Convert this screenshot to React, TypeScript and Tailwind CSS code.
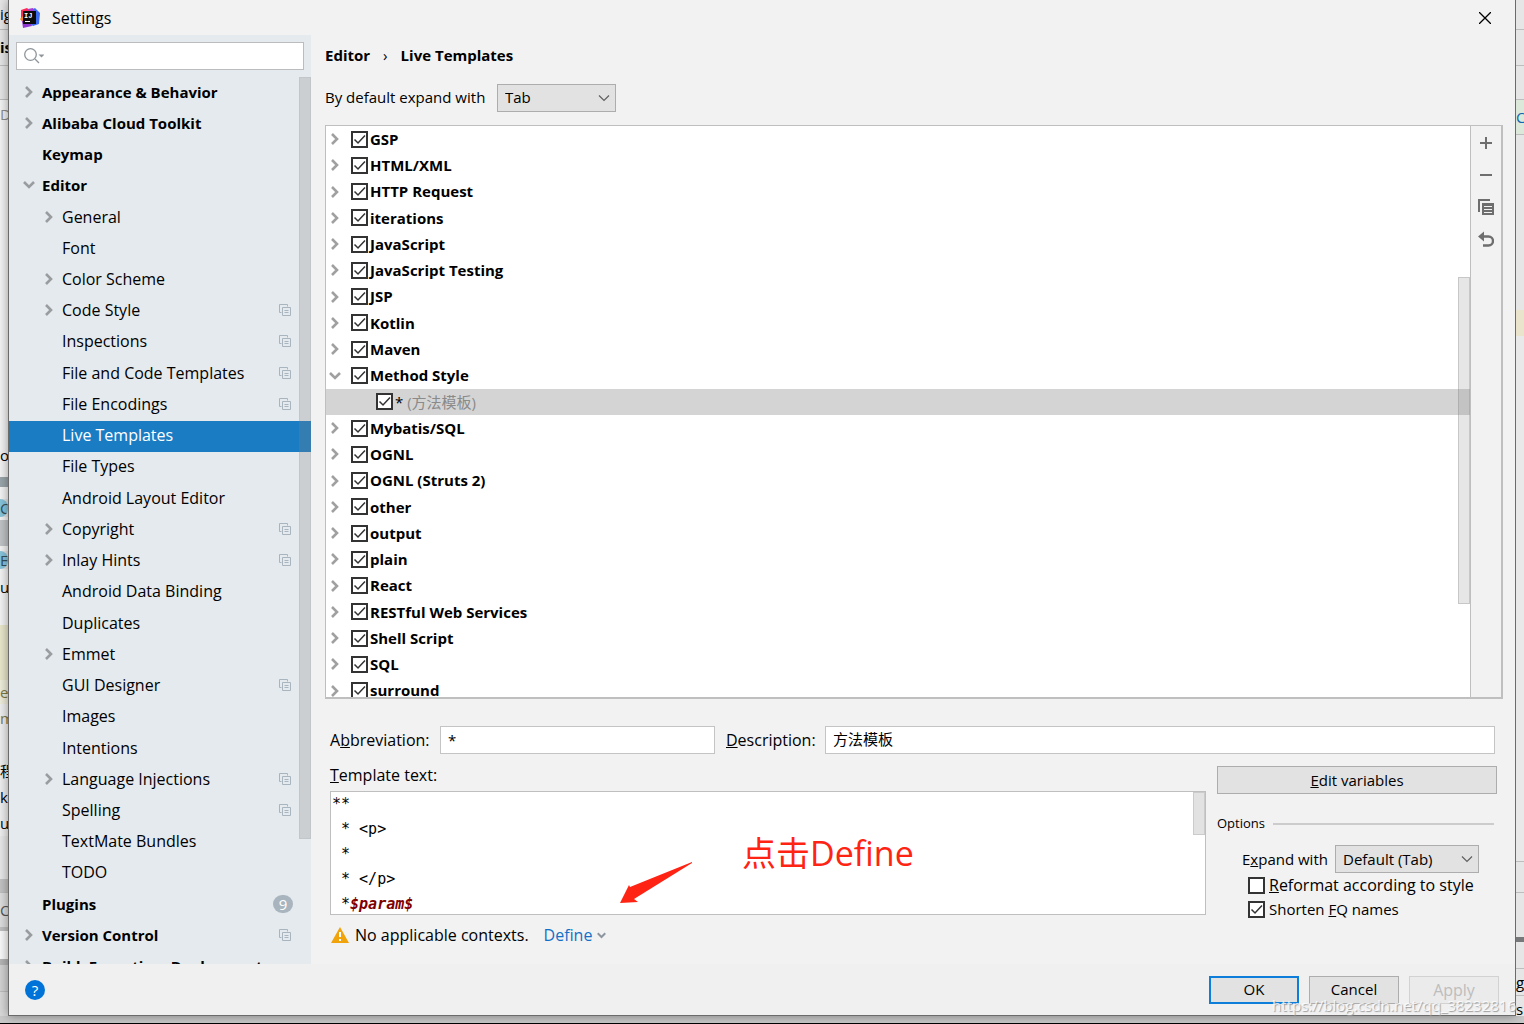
import React, { useState } from "react"

type TreeItem = {
  label: string
  level?: number
  arrow?: "right" | "down"
  project?: boolean
  badge?: number
}

type Strip = {
  h: number
  bg?: string
  line?: boolean
  text?: string
  bold?: boolean
  round?: boolean
  color?: string
}

const SETTINGS: TreeItem[] = [
  { label: "Appearance & Behavior", arrow: "right" },
  { label: "Alibaba Cloud Toolkit", arrow: "right" },
  { label: "Keymap" },
  { label: "Editor", arrow: "down" },
  { label: "General", level: 1, arrow: "right" },
  { label: "Font", level: 1 },
  { label: "Color Scheme", level: 1, arrow: "right" },
  { label: "Code Style", level: 1, arrow: "right", project: true },
  { label: "Inspections", level: 1, project: true },
  { label: "File and Code Templates", level: 1, project: true },
  { label: "File Encodings", level: 1, project: true },
  { label: "Live Templates", level: 1 },
  { label: "File Types", level: 1 },
  { label: "Android Layout Editor", level: 1 },
  { label: "Copyright", level: 1, arrow: "right", project: true },
  { label: "Inlay Hints", level: 1, arrow: "right", project: true },
  { label: "Android Data Binding", level: 1 },
  { label: "Duplicates", level: 1 },
  { label: "Emmet", level: 1, arrow: "right" },
  { label: "GUI Designer", level: 1, project: true },
  { label: "Images", level: 1 },
  { label: "Intentions", level: 1 },
  { label: "Language Injections", level: 1, arrow: "right", project: true },
  { label: "Spelling", level: 1, project: true },
  { label: "TextMate Bundles", level: 1 },
  { label: "TODO", level: 1 },
  { label: "Plugins", badge: 9 },
  { label: "Version Control", arrow: "right", project: true },
  { label: "Build, Execution, Deployment", arrow: "right" },
]

const GROUPS_BEFORE = [
  "GSP",
  "HTML/XML",
  "HTTP Request",
  "iterations",
  "JavaScript",
  "JavaScript Testing",
  "JSP",
  "Kotlin",
  "Maven",
]

const GROUPS_AFTER = [
  "Mybatis/SQL",
  "OGNL",
  "OGNL (Struts 2)",
  "other",
  "output",
  "plain",
  "React",
  "RESTful Web Services",
  "Shell Script",
  "SQL",
  "surround",
]

// slices of the IDE window that stay visible on both sides of the dialog
const LEFT_STRIP: Strip[] = [
  { h: 29, text: "ig" },
  { h: 36, line: true, text: "is", bold: true },
  { h: 34, line: true },
  { h: 30, line: true, bg: "#f4f4f4", text: "D", color: "#8c8c8c" },
  { h: 314, bg: "#f4f4f4" },
  { h: 24, bg: "#f4f4f4", text: "or" },
  { h: 10, bg: "#f4f4f4" },
  { h: 10, bg: "#9aa5ab" },
  { h: 12, bg: "#f4f4f4" },
  { h: 18, bg: "#86c5dc", text: "C", color: "#35505c", round: true },
  { h: 3, bg: "#f4f4f4" },
  { h: 26, bg: "#c0c4c6" },
  { h: 5, bg: "#f4f4f4" },
  { h: 18, bg: "#86c5dc", text: "E", color: "#35505c", round: true },
  { h: 6, bg: "#f4f4f4" },
  { h: 24, bg: "#f4f4f4", text: "ur" },
  { h: 26, bg: "#f4f4f4" },
  { h: 55, bg: "#e9e7cb" },
  { h: 24, bg: "#efedda", text: "ec", color: "#7d7a45" },
  { h: 28, bg: "#efefef", text: "m", color: "#7d7a45" },
  { h: 26, bg: "#efefef" },
  { h: 26, bg: "#efefef", text: "程" },
  { h: 26, bg: "#efefef", text: "k" },
  { h: 26, bg: "#efefef", text: "uc" },
  { h: 43, bg: "#e8e8e8" },
  { h: 13, bg: "#c3c3c3" },
  { h: 35, line: true, bg: "#dedede", text: "C", color: "#555555" },
  { h: 4, bg: "#c0c0c0" },
  { h: 28, bg: "#fafafa" },
  { h: 6, bg: "#b5b5b5" },
  { h: 26, bg: "#d2d2d2" },
  { h: 28, line: true, bg: "#d8d8d8" },
]

const RIGHT_STRIP: Strip[] = [
  { h: 29 },
  { h: 36, line: true },
  { h: 34, line: true },
  { h: 35, line: true, bg: "#dbe8da", text: "C", color: "#1068b0" },
  { h: 176, line: true },
  { h: 26, bg: "#e9e4cb" },
  { h: 525, bg: "#e9e9e9" },
  { h: 31, line: true },
  { h: 45, line: true },
  { h: 5, bg: "#77787a" },
  { h: 26 },
  { h: 27, line: true, text: "g" },
  { h: 28, line: true, text: "s" },
]

const BackdropStrip: React.FC<{ cells: Strip[] }> = ({ cells }) => (
  <div aria-hidden="true" className="flex flex-col bg-[#e6e6e6] w-[8px] shrink-0 overflow-hidden">
    {cells.map((cell, i) => (
      <div
        key={i}
        className={`flex items-center shrink-0 whitespace-nowrap overflow-hidden ${
          cell.line ? "border-t border-[#bdbdbd]" : ""
        } ${cell.bold ? "font-bold" : ""} ${cell.round ? "rounded-r-full" : ""}`}
        style={{ height: cell.h, background: cell.bg, color: cell.color }}
      >
        {cell.text}
      </div>
    ))}
  </div>
)

const Arrow: React.FC<{ dir?: "right" | "down"; className?: string }> = ({
  dir,
  className = "w-3 h-3",
}) => (
  <svg
    className={`shrink-0 ${className}`}
    viewBox="0 0 12 12"
    fill="none"
    stroke="currentColor"
    strokeWidth={2.6}
  >
    {dir === "right" && <path d="M3 1l5 5-5 5" />}
    {dir === "down" && <path d="M1 3l5 5 5-5" />}
  </svg>
)

const ProjectIcon = () => (
  <svg className="w-3 h-3" viewBox="0 0 12 12" fill="none" stroke="#a9b5be">
    <path d="M2.5 8.5h-2v-8h8v2" />
    <path d="M3.5 3.5h8v8h-8z" />
    <path d="M5.5 6.5h4M5.5 8.5h4" />
  </svg>
)

const Logo = () => (
  <svg className="w-5 h-5" viewBox="0 0 20 20">
    <path d="M1 2L7 0l5 4-4 9-7-3z" fill="#fe2857" />
    <path d="M0 11l4-4 3 6-4 2z" fill="#fc801d" />
    <path d="M2 13l8-2 2 7-9 2z" fill="#9039d0" />
    <path d="M11 2l4-2 5 5-1 11-6 2-4-3z" fill="#3b6cf0" />
    <path d="M8 1l5-1 2 4-5 1z" fill="#a63ad6" />
    <path d="M3 3h13v13H3z" fill="#0b0b0b" />
    <text x="4" y="10" fontSize="7" fontWeight="bold" fill="#fff" fontFamily="Liberation Mono, monospace">
      IJ
    </text>
    <path d="M5 13h5v1H5z" fill="#fff" />
  </svg>
)

const Checkbox: React.FC<{ label: string; defaultChecked?: boolean; children?: React.ReactNode }> = ({
  label,
  defaultChecked = true,
  children,
}) => (
  <label className="flex items-center gap-[2px]">
    <span className="grid shrink-0">
      <input
        type="checkbox"
        aria-label={label}
        defaultChecked={defaultChecked}
        className="peer col-start-1 row-start-1 appearance-none w-[17px] h-[17px] bg-white border-2 border-[#333333]"
      />
      <svg
        className="hidden peer-checked:block pointer-events-none col-start-1 row-start-1 w-[17px] h-[17px]"
        viewBox="0 0 17 17"
        fill="none"
        stroke="#333333"
        strokeWidth={1.5}
      >
        <path d="M3.5 8.5l3.5 3.5 7-7.5" />
      </svg>
    </span>
    {children}
  </label>
)

const Select: React.FC<{ id: string; options: string[]; className: string }> = ({
  id,
  options,
  className,
}) => (
  <span className={`grid text-[15px] ${className}`}>
    <select
      id={id}
      className="col-start-1 row-start-1 appearance-none w-full h-7 pl-[7px] bg-[#e2e2e2] border border-[#adadad]"
    >
      {options.map((option) => (
        <option key={option}>{option}</option>
      ))}
    </select>
    <svg
      className="pointer-events-none col-start-1 row-start-1 justify-self-end self-center mr-[6px] w-3 h-3"
      viewBox="0 0 12 12"
      fill="none"
      stroke="#606060"
      strokeWidth={1.2}
    >
      <path d="M1 3.5l5 5 5-5" />
    </svg>
  </span>
)

const SettingsTree: React.FC = () => {
  const [selected, setSelected] = useState("Live Templates")

  return (
    <div className="relative flex-1 min-h-0 overflow-hidden">
      <ul className="flex flex-col h-[906px]">
        {SETTINGS.map((item) => {
          const active = item.label === selected
          return (
            <li
              key={item.label}
              onClick={() => setSelected(item.label)}
              className={`flex flex-1 items-center pr-5 pb-[2px] ${
                item.level ? "pl-[34px] text-base" : "pl-[14px] font-bold"
              } ${active ? "bg-[#1a7dc4] text-white" : ""}`}
            >
              <Arrow dir={item.arrow} className="w-3 h-3 text-[#9a9da0] mr-[7px]" />
              <span className="flex-1 whitespace-nowrap leading-6">{item.label}</span>
              {item.project && <ProjectIcon />}
              {item.badge && (
                <span className="-mr-[2px] w-5 h-[18px] rounded-full bg-[#a9b5be] text-white text-center leading-[18px] font-normal">
                  {item.badge}
                </span>
              )}
            </li>
          )
        })}
      </ul>
      <div className="absolute top-0 right-0 w-3 h-[762px] bg-[#808080]/25 border border-[#808080]/10"></div>
    </div>
  )
}

const TemplateGroup: React.FC<{ name: string; open?: boolean }> = ({ name, open }) => (
  <li className="flex flex-1 items-center pl-[3px] font-bold">
    <Arrow dir={open ? "down" : "right"} className="w-3 h-3 text-[#a0a0a0] mr-[10px]" />
    <Checkbox label={name}>{name}</Checkbox>
  </li>
)

const TemplateList: React.FC = () => (
  <div className="flex flex-1 min-h-0 border border-b-2 border-r-2 border-[#bfbfbf]">
    <div className="relative flex-1 overflow-hidden bg-white">
      <ul className="flex flex-col h-[578px]">
        {GROUPS_BEFORE.map((name) => (
          <TemplateGroup key={name} name={name} />
        ))}
        <TemplateGroup name="Method Style" open />
        <li className="flex flex-1 items-center pl-[50px] bg-[#d4d4d4]">
          <Checkbox label="*">
            <span>
              * <span className="text-[#8a8a8a]">(方法模板)</span>
            </span>
          </Checkbox>
        </li>
        {GROUPS_AFTER.map((name) => (
          <TemplateGroup key={name} name={name} />
        ))}
      </ul>
      <div className="absolute top-[151px] right-0 w-3 h-[327px] bg-[#808080]/20 border border-[#808080]/30"></div>
    </div>
    <div className="flex flex-col items-center w-[31px] pt-[9px] gap-4 border-l border-[#bfbfbf] text-[#6e6e6e]">
      <button aria-label="Add">
        <svg className="block w-4 h-4" viewBox="0 0 16 16" fill="currentColor">
          <path d="M7 2h2v5h5v2H9v5H7V9H2V7h5z" />
        </svg>
      </button>
      <button aria-label="Remove">
        <svg className="block w-4 h-4" viewBox="0 0 16 16" fill="currentColor">
          <path d="M2 7h12v2H2z" />
        </svg>
      </button>
      <button aria-label="Duplicate">
        <svg className="block w-4 h-4" viewBox="0 0 16 16" fill="currentColor">
          <path d="M0 0h12v2H2v11H0z" />
          <path d="M4 4h12v12H4zm2 3v1h8V7zm0 3v1h8v-1zm0 3v1h8v-1z" fillRule="evenodd" />
        </svg>
      </button>
      <button aria-label="Restore defaults">
        <svg className="block w-4 h-4" viewBox="0 0 16 16" fill="none">
          <path d="M5 5.5h5.500a4.500 4.500 0 0 1 0 9H5" stroke="currentColor" strokeWidth={2.4} />
          <path d="M0 5.500l6-5v10z" fill="currentColor" />
        </svg>
      </button>
    </div>
  </div>
)

const TemplateEditor: React.FC = () => (
  <div className="relative h-[124px] bg-white border border-[#bfbfbf]">
    <pre
      role="textbox"
      aria-labelledby="template-text"
      className="h-full overflow-hidden pl-[1px] text-[15px] leading-[25px] font-['DejaVu_Sans_Mono',monospace]"
    >
      {"**\n * <p>\n *\n * </p>\n *"}
      <span className="font-bold italic text-[#800000]">$param$</span>
    </pre>
    <div className="absolute top-0 right-0 w-3 h-[43px] bg-[#e2e2e2] border border-[#cbcbcb]"></div>
    <svg className="absolute left-[288px] top-[69px] w-[74px] h-[43px]" viewBox="0 0 74 43">
      <path d="M73 1L11 26l-1-2-9 18 18-1-4-3L73 2z" fill="#ff2314" />
    </svg>
    <span className="absolute left-[411px] top-[37px] text-[34px] leading-[48px] text-[#ff2314] whitespace-nowrap">
      点击Define
    </span>
  </div>
)

const TemplateForm: React.FC = () => (
  <div className="flex flex-col pl-[5px] pt-[27px] h-[265px] shrink-0 text-base">
    <div className="flex items-center pr-2">
      <label htmlFor="abbreviation" className="w-[110px]">
        A<u>b</u>breviation:
      </label>
      <input
        id="abbreviation"
        defaultValue="*"
        className="w-[275px] h-7 px-[7px] text-[15px] bg-white border border-[#c4c4c4]"
      />
      <label htmlFor="description" className="ml-[11px] w-[99px]">
        <u>D</u>escription:
      </label>
      <input
        id="description"
        defaultValue="方法模板"
        className="flex-1 h-7 px-[7px] pb-1 text-[15px] bg-white border border-[#c4c4c4]"
      />
    </div>
    <div className="flex pt-3 gap-[11px] pr-[6px]">
      <div className="flex-1">
        <div id="template-text" className="h-[25px] leading-[18px]">
          <u>T</u>emplate text:
        </div>
        <TemplateEditor />
        <div className="flex items-center h-10">
          <svg className="w-5 h-4 mr-[5px]" viewBox="0 0 20 16">
            <path d="M10 0l9 16H1z" fill="#f0a30a" />
            <path d="M9 5h2v5H9zM9 12h2v2H9z" fill="#fff" />
          </svg>
          No applicable contexts.
          <a href="#define" className="flex items-center gap-[5px] ml-[15px] text-[#1370c8]">
            Define
            <Arrow dir="down" className="w-[9px] h-[9px] text-[#8d969e]" />
          </a>
        </div>
      </div>
      <div className="w-[280px]">
        <button className="block w-full h-7 text-[15px] bg-[#e2e2e2] border border-[#adadad]">
          <u>E</u>dit variables
        </button>
        <fieldset className="pt-5">
          <div className="flex items-center gap-2 h-5 pr-[3px] text-[13px]">
            Options
            <span className="flex-1 border-t-2 border-[#cccccc]"></span>
          </div>
          <div className="flex items-center pl-[25px] pt-[11px]">
            <label htmlFor="expand-with" className="w-[93px] text-[15px] whitespace-nowrap">
              E<u>x</u>pand with
            </label>
            <Select id="expand-with" options={["Default (Tab)", "Enter", "Space"]} className="w-[144px]" />
          </div>
          <div className="flex flex-col pl-[31px]">
            <Checkbox label="Reformat according to style" defaultChecked={false}>
              <span className="pl-[2px] leading-6 whitespace-nowrap">
                <u>R</u>eformat according to style
              </span>
            </Checkbox>
            <Checkbox label="Shorten FQ names">
              <span className="pl-[2px] text-[15px] leading-6 whitespace-nowrap">
                Shorten <u>F</u>Q names
              </span>
            </Checkbox>
          </div>
        </fieldset>
      </div>
    </div>
  </div>
)

const App: React.FC = () => {
  return (
    <div className="relative flex flex-col h-screen overflow-hidden bg-[#c9c9c9] text-[15px] text-black font-['Open_Sans','Noto_Sans_CJK_SC',sans-serif]">
      <div className="flex flex-1 min-h-0">
        <BackdropStrip cells={LEFT_STRIP} />
        <div
          role="dialog"
          aria-label="Settings"
          className="flex flex-col flex-1 min-w-0 bg-[#f2f2f2] border border-t-0 border-[#6b6b6b] shadow-[0_0_10px_rgba(0,0,0,0.4)]"
        >
          <header className="flex items-center h-[35px] shrink-0 pl-[11px] pr-6">
            <Logo />
            <h1 className="flex-1 pl-3 text-base">Settings</h1>
            <button aria-label="Close">
              <svg className="w-3 h-3" viewBox="0 0 12 12" stroke="#000" strokeWidth={1.3}>
                <path d="M0 0l12 12M12 0L0 12" />
              </svg>
            </button>
          </header>

          <div className="flex flex-1 min-h-0">
            <aside className="flex flex-col w-[302px] shrink-0 bg-[#e5eaee]">
              <div className="grid p-[7px]">
                <input
                  type="search"
                  aria-label="Search settings"
                  className="col-start-1 row-start-1 w-full h-7 pl-8 bg-white border border-[#bcbcbc]"
                />
                <svg
                  className="pointer-events-none col-start-1 row-start-1 self-center ml-2 w-5 h-4"
                  viewBox="0 0 20 16"
                  fill="none"
                  stroke="#8d959b"
                  strokeWidth={1.3}
                >
                  <circle cx="6.500" cy="6.500" r="5.800" />
                  <path d="M11 11l4 4" />
                  <path d="M14.500 6.500h6L17.500 9.500z" fill="#8d959b" stroke="none" />
                </svg>
              </div>
              <SettingsTree />
            </aside>

            <main className="flex flex-col flex-1 min-w-0 pl-[14px] pr-3">
              <div className="flex items-center gap-[13px] h-10 shrink-0 font-bold">
                Editor
                <span className="font-normal">›</span>
                Live Templates
              </div>
              <div className="flex items-center h-[45px] mb-[5px] shrink-0">
                <label htmlFor="default-expand" className="w-[172px] whitespace-nowrap">
                  By default expand with
                </label>
                <Select id="default-expand" options={["Tab", "Enter", "Space"]} className="w-[119px]" />
              </div>
              <TemplateList />
              <TemplateForm />
            </main>
          </div>

          <footer className="flex items-center gap-[10px] h-[51px] shrink-0 pl-4 pr-4 bg-[#f0f0f0]">
            <button
              aria-label="Help"
              className="w-5 h-5 rounded-full bg-[#0073d8] text-white leading-5"
            >
              ?
            </button>
            <span className="flex-1"></span>
            <button className="w-[90px] h-7 bg-[#e2e2e2] border-2 border-[#0d7fdb]">OK</button>
            <button className="w-[90px] h-7 bg-[#e2e2e2] border border-[#adadad]">Cancel</button>
            <button
              disabled
              className="w-[90px] h-7 text-base bg-[#ebebeb] border border-[#d2d2d2] text-[#bdbdbd]"
            >
              Apply
            </button>
          </footer>
        </div>
        <BackdropStrip cells={RIGHT_STRIP} />
      </div>
      <div className="h-2 shrink-0 border-b border-black"></div>
      <span className="pointer-events-none absolute right-2 bottom-[9px] text-[15px] leading-5 text-white/80 [text-shadow:1px_1px_1px_#9a9a9a]">
        https://blog.csdn.net/qq_38232816
      </span>
    </div>
  )
}

export default App
